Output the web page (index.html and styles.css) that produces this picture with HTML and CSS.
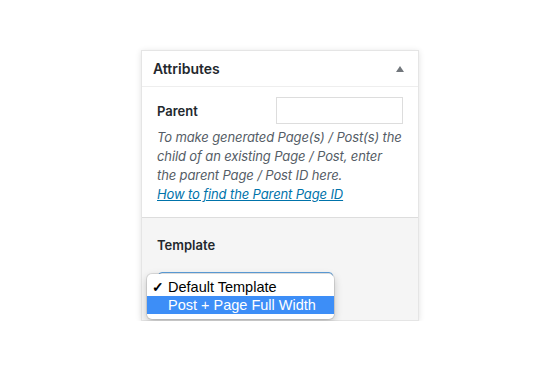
FILE: index.html
```html
<!DOCTYPE html>
<html lang="en">
<head>
  <meta charset="UTF-8">
  <title>Attributes</title>
  <link rel="stylesheet" href="styles.css">
</head>
<body>

  <div class="postbox">
    <div class="postbox-header">
      <h2>Attributes</h2>
      <span class="toggle-indicator"></span>
    </div>

    <div class="section">
      <div class="parent-row">
        <label for="parentId">Parent</label>
        <input type="text" id="parentId">
      </div>
      <p class="description">
        To make generated Page(s) / Post(s) the child of an existing Page / Post, enter the parent Page / Post ID here.
        <a href="#">How to find the Parent Page ID</a>
      </p>
    </div>

    <div class="section section-gray">
      <label>Template</label>
      <div class="select-wrap">
        <div class="select-box"></div>
        <!-- open dropdown -->
        <ul class="dropdown">
          <li class="checked"><span class="check">✓</span>Default Template</li>
          <li class="active">Post + Page Full Width</li>
        </ul>
      </div>
    </div>
  </div>

</body>
</html>
```

FILE: styles.css
```css
body {
  background-color: #fff;
  font-family: Inter, "Liberation Sans", sans-serif;
  margin: 0;
  color: #23282d;
}
.postbox {
  width: 276px;
  margin: 50px 0 0 141px;
  background: white;
  border: 1px solid #e5e5e5;
  box-shadow: 0px 1px 6px rgba(0, 0, 0, 0.12);
}
.postbox-header {
  height: 35px;
  display: flex;
  align-items: center;
  justify-content: space-between;
  padding: 0 14px 0 11px;
  border-bottom: 1px solid #eee;
}
.postbox-header h2 {
  margin: 0;
  font-size: 14px;
  font-weight: 600;
}
.toggle-indicator {
  width: 0;
  height: 0;
  border-left: 4px solid transparent;
  border-right: 4px solid transparent;
  border-bottom: 6px solid #72777c;
}
.section {
  padding: 10px 15px 13px;
}
.section-gray {
  background: #f5f5f5;
  border-top: 1px solid #ddd;
  height: 71px;
  padding-top: 16px;
  padding-bottom: 15px;
}
label {
  font-size: 13px;
  font-weight: 600;
}
.parent-row {
  display: flex;
  align-items: center;
  justify-content: space-between;
}
.parent-row input {
  width: 121px;
  height: 21px;
  margin: 0;
  padding: 2px;
  border: 1px solid #ddd;
  border-radius: 0;
}
.description {
  margin: 4px 0 0;
  font-size: 13px;
  font-style: italic;
  line-height: 19px;
  letter-spacing: -0.12px;
  color: #555d66;
}
.description a {
  display: block;
  width: fit-content;
  color: #0073aa;
}
.select-wrap {
  position: relative;
  margin-top: 18px;
  height: 30px;
}
.select-box {
  margin-left: 1px;
  width: 173px;
  height: 24px;
  border: 1px solid #5b9dd9;
  border-radius: 4px;
  background: white;
}
.dropdown {
  position: absolute;
  top: 2px;
  left: -10px;
  width: 187px;
  margin: 0;
  padding: 4px 0 5px;
  list-style: none;
  background: white;
  border-radius: 5px;
  box-shadow: 0 0 0 1px rgba(0, 0, 0, 0.1), 0 3px 8px rgba(0, 0, 0, 0.22);
  font-family: "Liberation Sans", sans-serif;
  font-size: 14.5px;
  color: #000;
}
.dropdown li {
  height: 18px;
  line-height: 18px;
  padding-left: 21px;
  position: relative;
}
.dropdown .check {
  position: absolute;
  left: 5px;
  font-size: 14px;
  font-weight: bold;
}
.dropdown .active {
  background: #3d8ef7;
  color: white;
}
```
